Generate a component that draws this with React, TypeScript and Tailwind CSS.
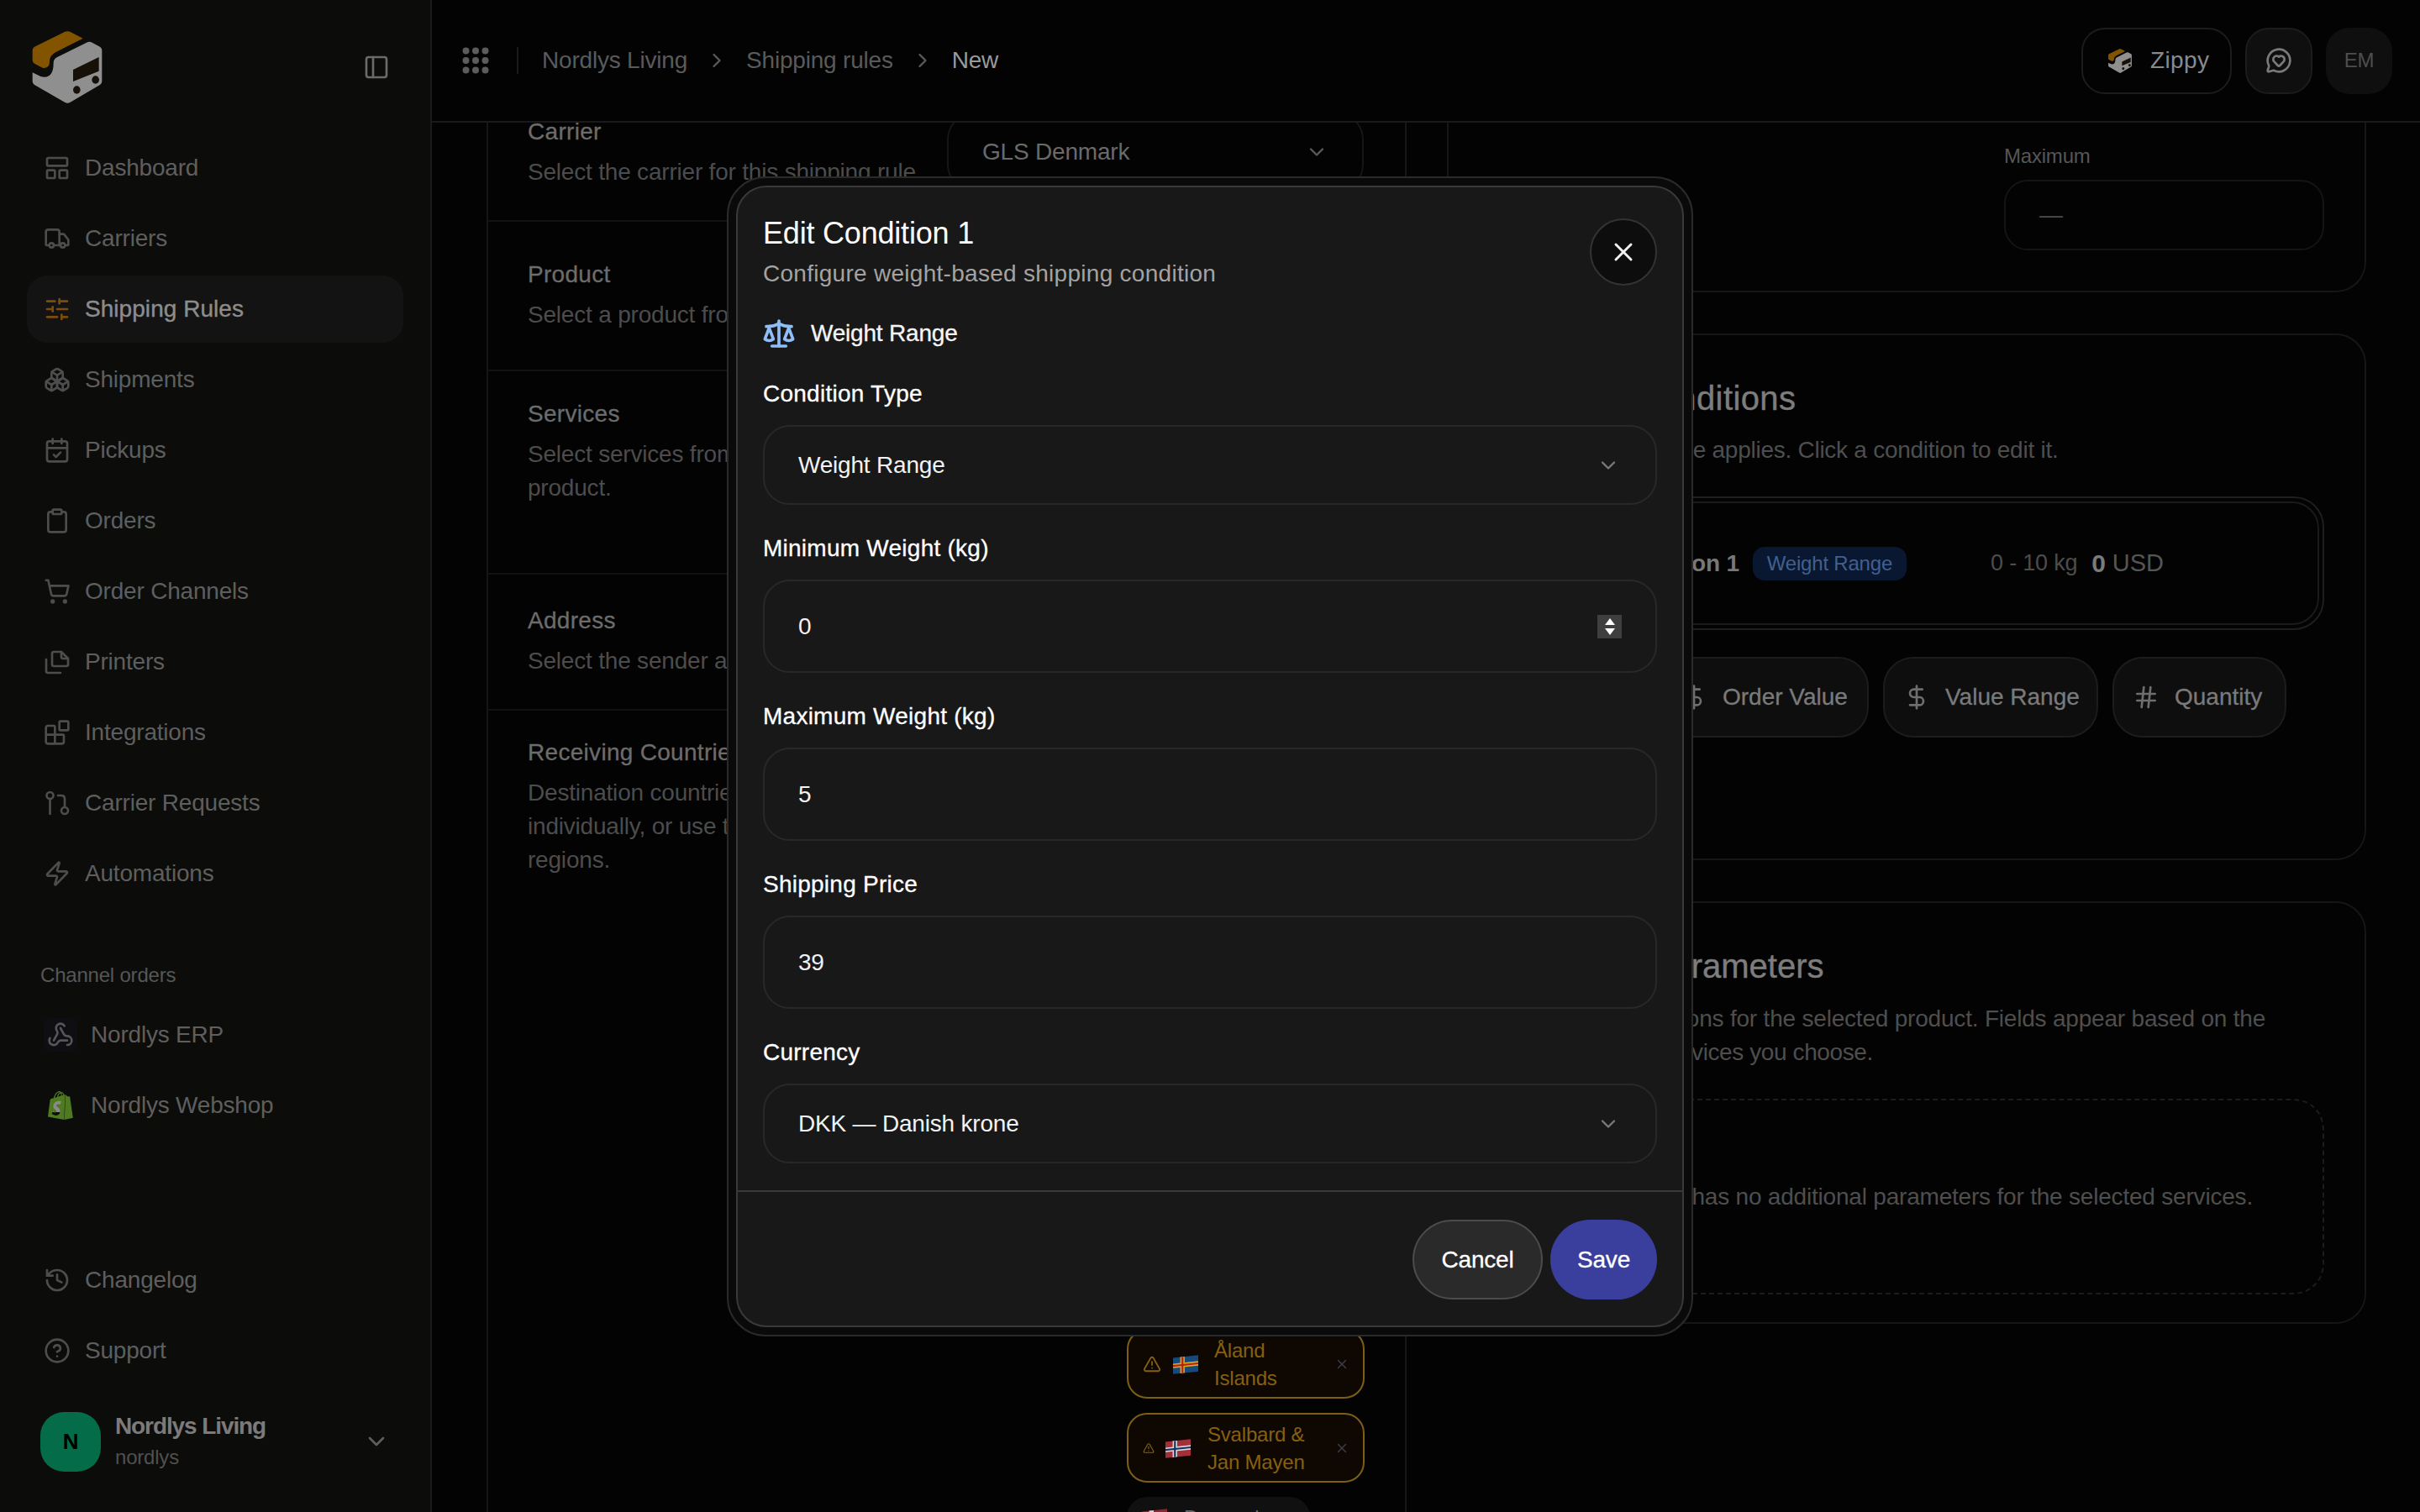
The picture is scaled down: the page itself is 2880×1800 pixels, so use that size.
import React from "react";
import {
  LayoutPanelTop, Truck, SlidersHorizontal, Boxes, CalendarCheck, Clipboard, ShoppingCart, Blocks, Zap,
  History, CircleHelp, ChevronDown, ChevronRight, PanelLeft, Webhook, MessageCircleHeart, X, Scale,
  DollarSign, Hash, TriangleAlert,
} from "lucide-react";
import { SiShopify } from "react-icons/si";

function Logo({ className }: { className: string }) {
  return (
    <svg viewBox="55 52 248 258" className={className}>
      <path d="M168 56 Q180 50 192 56 L235 78 L140 126 Q116 138 116 160 Q116 186 92 184 L62 168 Q55 164 55 156 L55 120 Q55 112 62 108 Z" fill="#825400" />
      <path d="M248 93 Q258 88 268 93 L296 108 Q303 112 303 120 L303 232 Q303 240 296 244 L190 306 Q180 312 170 306 L62 244 Q55 240 55 232 L55 200 L84 214 Q130 226 130 166 Q130 152 142 146 Z" fill="#8f8f8f" />
      <path d="M200 190 L292 145 L292 195 L200 232 Z" fill="#171008" />
      <ellipse cx="213" cy="262" rx="13" ry="14" fill="#171008" />
      <ellipse cx="280" cy="226" rx="13" ry="14" fill="#171008" />
    </svg>
  );
}

function PrintersIcon({ className }: { className: string }) {
  return (
    <svg viewBox="0 0 32 32" fill="none" stroke="currentColor" strokeWidth="2.67" strokeLinecap="round" strokeLinejoin="round" className={className}>
      <path d="M20 4 H12 Q10 4 10 6 V19 Q10 21 12 21 H27 Q29 21 29 19 V12 L21 4 Z" />
      <path d="M21 4 V10 Q21 12 23 12 H29" />
      <path d="M3 13 V27 Q3 29 5 29 H20" />
    </svg>
  );
}

function RequestIcon({ className }: { className: string }) {
  return (
    <svg viewBox="0 0 32 32" fill="none" stroke="currentColor" strokeWidth="2.67" strokeLinecap="round" strokeLinejoin="round" className={className}>
      <circle cx="7.5" cy="7" r="4" />
      <path d="M7.5 11 V29" />
      <circle cx="25" cy="25" r="4" />
      <path d="M25 21 V11 Q25 7 21 7 H17" />
    </svg>
  );
}

function Flag({ bg, outer, inner, className }: { bg: string; outer: string; inner?: string; className: string }) {
  return (
    <svg viewBox="0 0 28 20" className={className}>
      <g transform="skewY(-6) translate(0 3)">
        <rect width="28" height="18" fill={bg} />
        <rect x="8" width="5" height="18" fill={outer} />
        <rect y="6.5" width="28" height="5" fill={outer} />
        {inner && <rect x="9.5" width="2" height="18" fill={inner} />}
        {inner && <rect y="8" width="28" height="2" fill={inner} />}
      </g>
    </svg>
  );
}

const nav = [
  { label: "Dashboard", Icon: LayoutPanelTop },
  { label: "Carriers", Icon: Truck },
  { label: "Shipping Rules", Icon: SlidersHorizontal, active: true },
  { label: "Shipments", Icon: Boxes },
  { label: "Pickups", Icon: CalendarCheck },
  { label: "Orders", Icon: Clipboard },
  { label: "Order Channels", Icon: ShoppingCart },
  { label: "Printers", Icon: PrintersIcon },
  { label: "Integrations", Icon: Blocks },
  { label: "Carrier Requests", Icon: RequestIcon },
  { label: "Automations", Icon: Zap },
];

function NavRow({ label, Icon, active }: { label: string; Icon: React.ComponentType<{ className: string }>; active?: boolean }) {
  return (
    <div className={active ? "flex h-[80px] items-center gap-[17px] rounded-[24px] bg-[#131313] pl-[20px] text-[28px] tracking-[0.05px] text-[#8c8c8c] [-webkit-text-stroke:0.4px_currentColor]" : "flex h-[80px] items-center gap-[17px] rounded-[24px] pl-[20px] text-[28px] text-[#5e5e5e]"}>
      <Icon className={active ? "h-[32px] w-[32px] text-[#7d4c0c] [-webkit-text-stroke:0]" : "h-[32px] w-[32px] text-[#4d4d4d]"} />
      <span>{label}</span>
    </div>
  );
}

function Sidebar() {
  return (
    <aside className="flex h-full w-[514px] shrink-0 flex-col border-r-2 border-[#1a1a1a] bg-[#0c0c0b]">
      <div className="flex h-[160px] shrink-0 items-start justify-between pl-[38px] pr-[48px] pt-[37px]">
        <Logo className="h-[86px] w-[84px]" />
        <PanelLeft className="mt-[27px] h-[32px] w-[32px] text-[#6a6a6a]" />
      </div>
      <nav className="mx-[32px] flex flex-col gap-[4px]">
        {nav.map((n) => (
          <NavRow key={n.label} {...n} />
        ))}
      </nav>
      <div className="ml-[48px] mt-[65px] text-[24px] leading-[32px] text-[#565656]">Channel orders</div>
      <div className="mx-[32px] mt-[15px] flex flex-col gap-[4px]">
        <div className="flex h-[80px] items-center gap-[16px] pl-[20px] text-[28px] text-[#5e5e5e]">
          <div className="flex h-[40px] w-[40px] items-center justify-center rounded-[8px] bg-[#0e0e13]">
            <Webhook className="h-[32px] w-[32px] text-[#565656]" />
          </div>
          <span>Nordlys ERP</span>
        </div>
        <div className="flex h-[80px] items-center gap-[16px] pl-[20px] text-[28px] text-[#5e5e5e]">
          <div className="relative flex h-[40px] w-[40px] items-center justify-center">
            <div className="absolute left-[10px] top-[12px] h-[16px] w-[12px] bg-[#8a8a8a]" />
            <SiShopify className="relative h-[34px] w-[34px] text-[#4f7a21]" />
          </div>
          <span>Nordlys Webshop</span>
        </div>
      </div>
      <div className="mx-[32px] mt-auto flex flex-col gap-[4px]">
        <NavRow label="Changelog" Icon={History} />
        <NavRow label="Support" Icon={CircleHelp} />
      </div>
      <div className="mb-[47px] ml-[48px] mr-[48px] mt-[31px] flex items-center">
        <div className="flex h-[71px] w-[72px] items-center justify-center rounded-[28px] bg-[#046c48] text-[26px] font-bold text-black">N</div>
        <div className="ml-[17px] flex flex-col">
          <span className="text-[28px] font-semibold leading-[37px] tracking-[-1.1px] text-[#7b7b7b]">Nordlys Living</span>
          <span className="text-[24px] leading-[37px] text-[#505050]">nordlys</span>
        </div>
        <ChevronDown className="ml-auto h-[32px] w-[32px] text-[#5e5e5e]" />
      </div>
    </aside>
  );
}

function Header() {
  return (
    <header className="flex h-[146px] shrink-0 items-center border-b-2 border-[#1a1a1a] bg-[#030303] pl-[36px] pr-[33px]">
      <svg viewBox="0 0 32 32" className="h-[32px] w-[32px] text-[#5c5c5c]" fill="currentColor">
        {[4.5, 16, 27.5].map((y) =>
          [4.5, 16, 27.5].map((x) => <circle key={`${x}-${y}`} cx={x} cy={y} r="4" />)
        )}
      </svg>
      <div className="ml-[33px] h-[32px] w-[2px] bg-[#1a1a1a]" />
      <div className="ml-[28px] flex items-center text-[28px]">
        <span className="text-[#5a5a5a]">Nordlys Living</span>
        <ChevronRight className="mx-[21px] h-[28px] w-[28px] text-[#5a5a5a]" />
        <span className="text-[#5a5a5a]">Shipping rules</span>
        <ChevronRight className="mx-[21px] h-[28px] w-[28px] text-[#5a5a5a]" />
        <span className="text-[#9a9a9a]">New</span>
      </div>
      <div className="ml-auto flex items-center gap-[16px]">
        <div className="flex h-[79px] w-[179px] items-center gap-[22px] rounded-[28px] border-2 border-[#1c1c1c] pl-[30px] text-[28px] tracking-[0.4px] text-[#8a8a8a]">
          <Logo className="h-[29px] w-[28px]" />
          <span>Zippy</span>
        </div>
        <div className="flex h-[79px] w-[80px] items-center justify-center rounded-[28px] border-2 border-[#1c1c1c] bg-[#0f0f0f]">
          <MessageCircleHeart className="h-[32px] w-[32px] text-[#7a7a7a]" />
        </div>
        <div className="flex h-[79px] w-[79px] items-center justify-center rounded-[28px] bg-[#0f0f0f] text-[24px] text-[#4e4e4e]">EM</div>
      </div>
    </header>
  );
}

function RowText({ title, children }: { title: string; children: React.ReactNode }) {
  return (
    <div className="flex w-[480px] shrink-0 flex-col gap-[8px]">
      <div className="text-[28px] leading-[40px] tracking-[0.3px] text-[#6c6c6c] [-webkit-text-stroke:0.3px_currentColor]">{title}</div>
      <div className="whitespace-nowrap text-[28px] leading-[40px] text-[#4c4c4c]">{children}</div>
    </div>
  );
}

function LeftCard() {
  return (
    <section className="-mt-[41px] flex w-[1095px] shrink-0 flex-col border-x-2 border-[#161616]">
      <div className="flex h-[159px] shrink-0 justify-between border-b-2 border-[#121212] pl-[47px] pr-[49px] pt-[32px]">
        <RowText title="Carrier">Select the carrier for this shipping rule</RowText>
        <div className="-mt-[3px] flex h-[94px] w-[496px] items-center justify-between rounded-[32px] border-2 border-[#161616] pl-[40px] pr-[40px] text-[28px] text-[#6a6a6a]">
          <span>GLS Denmark</span>
          <ChevronDown className="h-[28px] w-[28px] text-[#5a5a5a]" />
        </div>
      </div>
      <div className="h-[178px] shrink-0 border-b-2 border-[#121212] pl-[47px] pt-[43px]">
        <RowText title="Product">Select a product from this carrier</RowText>
      </div>
      <div className="h-[242px] shrink-0 border-b-2 border-[#121212] pl-[47px] pt-[31px]">
        <RowText title="Services">
          Select services from this carrier's
          <br />
          product.
        </RowText>
      </div>
      <div className="h-[162px] shrink-0 border-b-2 border-[#121212] pl-[47px] pt-[35px]">
        <RowText title="Address">Select the sender address</RowText>
      </div>
      <div className="flex pl-[47px] pt-[30px]">
        <RowText title="Receiving Countries">
          Destination countries can be added
          <br />
          individually, or use the buttons for
          <br />
          regions.
        </RowText>
        <div className="ml-[233px] flex flex-col gap-[17px] pt-[706px]">
          <div className="flex h-[83px] w-[283px] items-center rounded-[24px] border-2 border-[#7d5f14] bg-[#0f0802] pl-[17px] pr-[16px] text-[24px] leading-[33px] text-[#86600f]">
            <TriangleAlert className="h-[22px] w-[22px] shrink-0" />
            <Flag bg="#174a7c" outer="#d9a90f" inner="#b32020" className="ml-[14px] h-[24px] w-[30px] shrink-0" />
            <span className="ml-[19px]">Åland<br />Islands</span>
            <X className="ml-auto h-[18px] w-[18px] shrink-0 text-[#3c3c46]" />
          </div>
          <div className="flex h-[83px] w-[283px] items-center rounded-[24px] border-2 border-[#7d5f14] bg-[#0f0802] pl-[17px] pr-[16px] text-[24px] leading-[33px] text-[#86600f]">
            <TriangleAlert className="h-[14px] w-[14px] shrink-0" />
            <Flag bg="#a33038" outer="#d8d8d8" inner="#1c2f63" className="ml-[13px] h-[24px] w-[30px] shrink-0" />
            <span className="ml-[20px] whitespace-nowrap">Svalbard &amp;<br />Jan Mayen</span>
            <X className="ml-auto h-[18px] w-[18px] shrink-0 text-[#3c3c46]" />
          </div>
          <div className="flex h-[50px] w-[218px] items-center rounded-[24px] bg-[#101010] pl-[18px] text-[24px] text-[#6a6a6a]">
            <Flag bg="#8f2733" outer="#d8d8d8" className="h-[24px] w-[30px] shrink-0" />
            <span className="ml-[20px]">Denmark</span>
          </div>
        </div>
      </div>
    </section>
  );
}

function OptionButton({ Icon, label, w }: { Icon: React.ComponentType<{ className: string }>; label: string; w: string }) {
  return (
    <div className={`flex h-[96px] ${w} shrink-0 items-center gap-[18px] rounded-[36px] border-2 border-[#1c1c1c] bg-[#0e0e0e] pl-[22px] text-[28px] tracking-[0px] text-[#7a7a7a] [-webkit-text-stroke:0.3px_currentColor]`}>
      <Icon className="h-[32px] w-[32px] shrink-0 text-[#6e6e6e]" />
      <span className="whitespace-nowrap">{label}</span>
    </div>
  );
}

function RightColumn() {
  return (
    <div className="-mt-[41px] flex w-[1094px] shrink-0 flex-col gap-[49px]">
      <section className="flex h-[243px] flex-col items-end justify-end rounded-b-[36px] border-2 border-t-0 border-[#161616] pb-[48px] pr-[48px]">
        <div className="w-[381px] text-[24px] leading-[32px] text-[#565656]">Maximum</div>
        <div className="mt-[12px] flex h-[84px] w-[381px] items-center rounded-[28px] border-2 border-[#141414] pl-[40px] text-[28px] text-[#4c4c4c]">—</div>
      </section>
      <section className="flex h-[627px] flex-col rounded-[36px] border-2 border-[#161616] pl-[50px] pr-[48px] pt-[51px]">
        <div className="text-[40px] leading-[48px] tracking-[0.4px] text-[#7d7d7d] [-webkit-text-stroke:0.4px_currentColor]">Shipping Conditions</div>
        <div className="mt-[18px] text-[28px] leading-[40px] tracking-[-0.26px] text-[#4e4e4e]">Define when this rule applies. Click a condition to edit it.</div>
        <div className="mt-[35px] h-[159px] rounded-[36px] border-2 border-[#1e1e1e] p-[4px]">
          <div className="flex h-full items-center rounded-[32px] border-2 border-[#1a1a1a] pl-[136px]">
            <span className="text-[28px] font-semibold text-[#787878]">Condition 1</span>
            <span className="ml-[16px] flex h-[40px] items-center rounded-[14px] bg-[#0a1730] px-[17px] text-[24px] text-[#41608f]">Weight Range</span>
            <span className="ml-[100px] text-[27px] text-[#4c4c4c]">0 - 10 kg</span>
            <span className="ml-[17px] text-[30px] font-bold text-[#7b7b7b]">0</span>
            <span className="ml-[8px] text-[29px] tracking-[0px] text-[#555555]">USD</span>
          </div>
        </div>
        <div className="mt-[32px] flex gap-[17px]">
          <OptionButton Icon={Scale} label="Weight Range" w="w-[185px]" />
          <OptionButton Icon={DollarSign} label="Order Value" w="w-[248px]" />
          <OptionButton Icon={DollarSign} label="Value Range" w="w-[256px]" />
          <OptionButton Icon={Hash} label="Quantity" w="w-[207px]" />
        </div>
      </section>
      <section className="flex h-[503px] flex-col rounded-[36px] border-2 border-[#161616] pl-[50px] pr-[48px] pt-[51px]">
        <div className="ml-[3px] text-[40px] leading-[48px] tracking-[0px] text-[#7d7d7d] [-webkit-text-stroke:0.4px_currentColor]">Additional Parameters</div>
        <div className="mt-[19px] whitespace-nowrap text-[28px] leading-[40px] text-[#4e4e4e]">
          Configure your options for the selected product. Fields appear based on the
          <br />
          <span className="tracking-[-0.4px]">carrier, type and services you choose.</span>
        </div>
        <div className="mt-[35px] flex h-[233px] items-center justify-end rounded-[36px] border-2 border-dashed border-[#1c1c1c] pr-[83px] text-[28px] text-[#4e4e4e]">
          This carrier has no additional parameters for the selected services.
        </div>
      </section>
    </div>
  );
}

function Field({ label, children }: { label: string; children: React.ReactNode }) {
  return (
    <div className="flex flex-col gap-[17px]">
      <div className="text-[28px] leading-[40px] tracking-[0.25px] text-white [-webkit-text-stroke:0.3px_currentColor]">{label}</div>
      {children}
    </div>
  );
}

function SelectBox({ value }: { value: string }) {
  return (
    <div className="flex h-[95px] items-center justify-between rounded-[32px] border-2 border-[#282828] pl-[40px] pr-[42px] text-[28px] text-[#f2f2f2]">
      <span className="whitespace-nowrap">{value}</span>
      <ChevronDown className="h-[28px] w-[28px] text-[#7a7a7a]" />
    </div>
  );
}

function InputBox({ value, spinner }: { value: string; spinner?: boolean }) {
  return (
    <div className="flex h-[111px] items-center justify-between rounded-[32px] border-2 border-[#282828] pl-[40px] pr-[40px] text-[28px] text-[#f2f2f2]">
      <span>{value}</span>
      {spinner && (
        <div className="flex h-[28px] w-[29px] items-center justify-center bg-[#3f3f3f]">
          <svg viewBox="0 0 16 22" className="h-[22px] w-[16px] fill-white">
            <path d="M8 1 L14 9 H2 Z M2 13 H14 L8 21 Z" />
          </svg>
        </div>
      )}
    </div>
  );
}

function Modal() {
  return (
    <div className="absolute left-[865px] top-[210px] h-[1381px] w-[1150px] rounded-[46px] border-2 border-[#2a2a2a] bg-[#0a0a0a] p-[9px]">
      <div className="relative flex h-full flex-col rounded-[36px] border-2 border-[#3a3a3a] bg-[#181818]">
        <div className="flex flex-col px-[30px] pt-[35px]">
          <div className="text-[36px] leading-[40px] text-white">Edit Condition 1</div>
          <div className="mt-[8px] whitespace-nowrap text-[28px] leading-[40px] tracking-[0.28px] text-[#a3a3a3]">Configure weight-based shipping condition</div>
          <div className="mt-[33px] flex h-[36px] items-center gap-[18px] text-[28px] text-[#f5f5f5] [-webkit-text-stroke:0.3px_currentColor]">
            <Scale className="-ml-[1px] h-[40px] w-[40px] text-[#8fbdf7]" strokeWidth={2.2} />
            <span>Weight Range</span>
          </div>
          <div className="mt-[34px] flex flex-col gap-[32px]">
            <Field label="Condition Type"><SelectBox value="Weight Range" /></Field>
            <Field label="Minimum Weight (kg)"><InputBox value="0" spinner /></Field>
            <Field label="Maximum Weight (kg)"><InputBox value="5" /></Field>
            <Field label="Shipping Price"><InputBox value="39" /></Field>
            <Field label="Currency"><SelectBox value="DKK — Danish krone" /></Field>
          </div>
        </div>
        <div className="mt-[32px] flex flex-1 items-start justify-end gap-[9px] border-t-2 border-[#3a3a3a] pr-[30px] pt-[33px]">
          <div className="flex h-[95px] w-[155px] items-center justify-center rounded-full border-2 border-[#4c4c4c] bg-[#2a2a2a] text-[28px] text-white [-webkit-text-stroke:0.3px_currentColor]">Cancel</div>
          <div className="flex h-[95px] w-[127px] items-center justify-center rounded-full bg-[#3a3f9e] text-[28px] text-white [-webkit-text-stroke:0.3px_currentColor]">Save</div>
        </div>
        <div className="absolute right-[30px] top-[37px] flex h-[80px] w-[80px] items-center justify-center rounded-full border-2 border-[#333333] bg-[#0d0d0d]">
          <X className="h-[36px] w-[36px] text-[#f0f0f0]" />
        </div>
      </div>
    </div>
  );
}

export default function App() {
  return (
    <div className="relative flex h-[1800px] w-[2880px] overflow-hidden bg-[#030303] font-[family-name:'Liberation_Sans',sans-serif] tracking-[-0.2px]">
      <Sidebar />
      <main className="flex h-full min-w-0 flex-1 flex-col">
        <Header />
        <div className="flex flex-1 gap-[48px] overflow-hidden pl-[65px]">
          <LeftCard />
          <RightColumn />
        </div>
      </main>
      <Modal />
    </div>
  );
}
